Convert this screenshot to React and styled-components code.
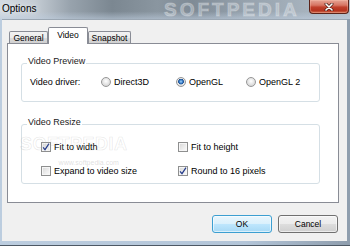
import styled, { createGlobalStyle } from 'styled-components';

const GlobalStyle = createGlobalStyle`
  html, body {
    margin: 0;
    padding: 0;
  }
  body {
    background: #ffffff;
    font-family: 'Liberation Sans', Arial, sans-serif;
  }
`;

function Radio({ label, checked }) {
  return (
    <Option>
      <RadioDot $checked={checked} />
      {label}
    </Option>
  );
}

function Check({ label, checked }) {
  return (
    <Option>
      <CheckBox>
        {checked && (
          <svg width="8" height="8" viewBox="0 0 8 8">
            <path d="M1 4.3 L3 6.7 L7 0.6" fill="none" stroke="#233a8a" strokeWidth="1.2" />
          </svg>
        )}
      </CheckBox>
      {label}
    </Option>
  );
}

export default function App() {
  return (
    <>
      <GlobalStyle />
      <Window>
        <TitleBar>
          <Title>Options</Title>
          <TitleMark>SOFTPEDIA</TitleMark>
          <CloseButton aria-label="Close">
            <svg width="10" height="8" viewBox="0 0 10 8">
              <path d="M2 1 L8 7 M8 1 L2 7" stroke="#4a1d16" strokeWidth="3" strokeLinecap="round" />
              <path d="M2 1 L8 7 M8 1 L2 7" stroke="#ffffff" strokeWidth="1.6" strokeLinecap="round" />
            </svg>
          </CloseButton>
        </TitleBar>
        <Client>
          <TabStrip>
            <Tab $w={39}>General</Tab>
            <Tab $w={40} $active>Video</Tab>
            <Tab $w={43}>Snapshot</Tab>
          </TabStrip>
          <Panel>
            <Group $top={19} $bottom={13}>
              <GroupLabel>Video Preview</GroupLabel>
              <DriverRow>
                <FieldLabel>Video driver:</FieldLabel>
                <Radio label="Direct3D" />
                <Radio label="OpenGL" checked />
                <Radio label="OpenGL 2" />
              </DriverRow>
            </Group>
            <Group $top={22} $bottom={6}>
              <GroupLabel>Video Resize</GroupLabel>
              <Watermark>
                <span>SOFTPEDIA</span>
                <small>www.softpedia.com</small>
              </Watermark>
              <CheckGrid>
                <Check label="Fit to width" checked />
                <Check label="Fit to height" />
                <Check label="Expand to video size" />
                <Check label="Round to 16 pixels" checked />
              </CheckGrid>
            </Group>
          </Panel>
          <ButtonRow>
            <Button $default>OK</Button>
            <Button>Cancel</Button>
          </ButtonRow>
        </Client>
      </Window>
    </>
  );
}

const Window = styled.div`
  width: 350px;
  height: 246px;
  box-sizing: border-box;
  display: flex;
  flex-direction: column;
  background: linear-gradient(90deg, #bccddf 0%, #b3c5d8 70%, #8f9eae 99%);
  border-bottom: 1px solid #4d5864;
`;

const TitleBar = styled.div`
  position: relative;
  height: 19px;
  flex: none;
  display: flex;
  align-items: flex-start;
  justify-content: space-between;
  overflow: hidden;
  background:
    linear-gradient(180deg, rgba(255, 255, 255, 0) 60%, rgba(190, 205, 222, 0.6) 100%),
    linear-gradient(90deg, #d3dae1 0%, #c4ccd4 10%, #98a3ad 20%, #7b8791 32%, #8a96a0 45%, #7f8b96 55%, #96a2ad 70%, #a4b0bb 85%, #b2bec9 100%);
`;

const Title = styled.span`
  position: relative;
  z-index: 1;
  margin: 3px 0 0 2px;
  font-family: 'Liberation Sans', Arial, sans-serif;
  font-size: 10px;
  line-height: 11px;
  color: #000000;
  text-shadow: 0 0 6px rgba(255, 255, 255, 0.9);
`;

const TitleMark = styled.span`
  position: absolute;
  left: 164px;
  top: 0;
  font-family: 'Liberation Sans', Arial, sans-serif;
  font-weight: bold;
  font-size: 19px;
  line-height: 19px;
  letter-spacing: 3px;
  color: rgba(235, 240, 245, 0.35);
  -webkit-text-stroke: 1px rgba(255, 255, 255, 0.25);
`;

const CloseButton = styled.button`
  position: relative;
  z-index: 1;
  width: 40px;
  height: 14px;
  margin: 0 1px 0 0;
  padding: 0;
  display: flex;
  align-items: center;
  justify-content: center;
  border: 1px solid #5b2319;
  border-top: none;
  border-radius: 0 0 4px 4px;
  background: linear-gradient(180deg, #e6a596 0%, #d77563 40%, #c0402c 55%, #b5331f 80%, #cf6a4c 100%);
  box-shadow: inset 0 0 0 1px rgba(255, 200, 180, 0.35);
`;

const Client = styled.div`
  flex: none;
  height: 222px;
  margin: 0 3px 0 2px;
  box-sizing: border-box;
  padding-top: 7px;
  border-top: 1px solid #9ba7b3;
  background: #f0f0f0;
  display: flex;
  flex-direction: column;
`;

const TabStrip = styled.div`
  position: relative;
  z-index: 1;
  height: 16px;
  margin-left: 5px;
  padding-left: 2px;
  display: flex;
  align-items: flex-end;
`;

const Tab = styled.div`
  width: ${({ $w }) => $w}px;
  height: ${({ $active }) => ($active ? 17 : 12)}px;
  margin-bottom: ${({ $active }) => ($active ? -1 : 0)}px;
  box-sizing: border-box;
  display: flex;
  align-items: center;
  justify-content: center;
  padding-bottom: ${({ $active }) => ($active ? 2 : 0)}px;
  border: 1px solid #898c95;
  border-bottom: none;
  border-radius: 2px 2px 0 0;
  font-size: 8.5px;
  color: #000000;
  background: ${({ $active }) =>
    $active
      ? '#ffffff'
      : 'linear-gradient(180deg, #f2f2f2 0%, #ebebeb 50%, #dddddd 51%, #cfcfcf 100%)'};
`;

const Panel = styled.div`
  margin-left: 5px;
  width: 332px;
  height: 160px;
  box-sizing: border-box;
  padding: 0 0 0 13px;
  border: 1px solid #898c95;
  background: #ffffff;
  display: flex;
  flex-direction: column;
`;

const Group = styled.div`
  position: relative;
  width: 299px;
  box-sizing: border-box;
  margin-top: ${({ $top }) => $top}px;
  padding-bottom: ${({ $bottom }) => $bottom}px;
  border: 1px solid #d5dfe5;
  border-radius: 3px;
  display: flex;
  flex-direction: column;
`;

const GroupLabel = styled.span`
  align-self: flex-start;
  margin: -8px 0 0 5px;
  padding: 0 1px;
  background: #ffffff;
  font-size: 9px;
  line-height: 11px;
  color: #1b1b1b;
`;

const DriverRow = styled.div`
  margin-top: 9px;
  padding-left: 8px;
  display: grid;
  grid-template-columns: 71px 75px 70px 1fr;
  align-items: center;
  height: 12px;
`;

const FieldLabel = styled.span`
  font-size: 9px;
  line-height: 12px;
  color: #000000;
`;

const Option = styled.label`
  display: flex;
  align-items: center;
  gap: 3px;
  font-size: 9px;
  line-height: 12px;
  color: #000000;
  white-space: nowrap;
`;

const RadioDot = styled.span`
  flex: none;
  width: 10px;
  height: 10px;
  box-sizing: border-box;
  border: 1px solid #979797;
  border-radius: 50%;
  background: ${({ $checked }) =>
    $checked
      ? 'radial-gradient(circle at 50% 45%, #a9d6f7 0, #3a80cc 1.6px, #1d4f90 2.6px, #e9e9e9 3.1px, #cfcfcf 100%)'
      : 'radial-gradient(circle at 50% 40%, #ffffff 0, #ececec 35%, #c8c8c8 100%)'};
`;

const CheckGrid = styled.div`
  margin-top: 13px;
  padding-left: 19px;
  display: grid;
  grid-template-columns: 137px 1fr;
  row-gap: 12px;
`;

const CheckBox = styled.span`
  flex: none;
  width: 10px;
  height: 10px;
  box-sizing: border-box;
  border: 1px solid #8e8f8f;
  display: flex;
  align-items: center;
  justify-content: center;
  background: linear-gradient(135deg, #d6d6d6 0%, #eeeeee 60%, #fbfbfb 100%);
  box-shadow: inset 0 0 0 1px #f6f6f6;
`;

const Watermark = styled.div`
  position: absolute;
  left: -2px;
  top: 10px;
  display: flex;
  flex-direction: column;
  align-items: center;
  pointer-events: none;
  span {
    font-family: 'Liberation Sans', Arial, sans-serif;
    font-weight: bold;
    font-size: 18px;
    line-height: 18px;
    letter-spacing: 0.5px;
    color: rgba(255, 255, 255, 0);
    -webkit-text-stroke: 0.6px rgba(170, 170, 170, 0.3);
  }
  small {
    margin: 6px 0 0 30px;
    font-size: 7px;
    color: rgba(160, 160, 160, 0.35);
  }
`;

const ButtonRow = styled.div`
  margin: 12px 9px 0 0;
  display: flex;
  justify-content: flex-end;
  gap: 6px;
`;

const Button = styled.button`
  width: 60px;
  height: 18px;
  padding: 0;
  font-family: 'Liberation Sans', Arial, sans-serif;
  font-size: 8.5px;
  color: #000000;
  border-radius: 3px;
  border: 1px solid ${({ $default }) => ($default ? '#3c9fd1' : '#707070')};
  background: ${({ $default }) =>
    $default
      ? 'linear-gradient(180deg, #eaf6fd 0%, #d9f0fc 50%, #bee6fd 51%, #a7d9f5 100%)'
      : 'linear-gradient(180deg, #f2f2f2 0%, #ebebeb 50%, #dddddd 51%, #cfcfcf 100%)'};
  box-shadow: inset 0 0 0 1px rgba(255, 255, 255, 0.6);
`;
